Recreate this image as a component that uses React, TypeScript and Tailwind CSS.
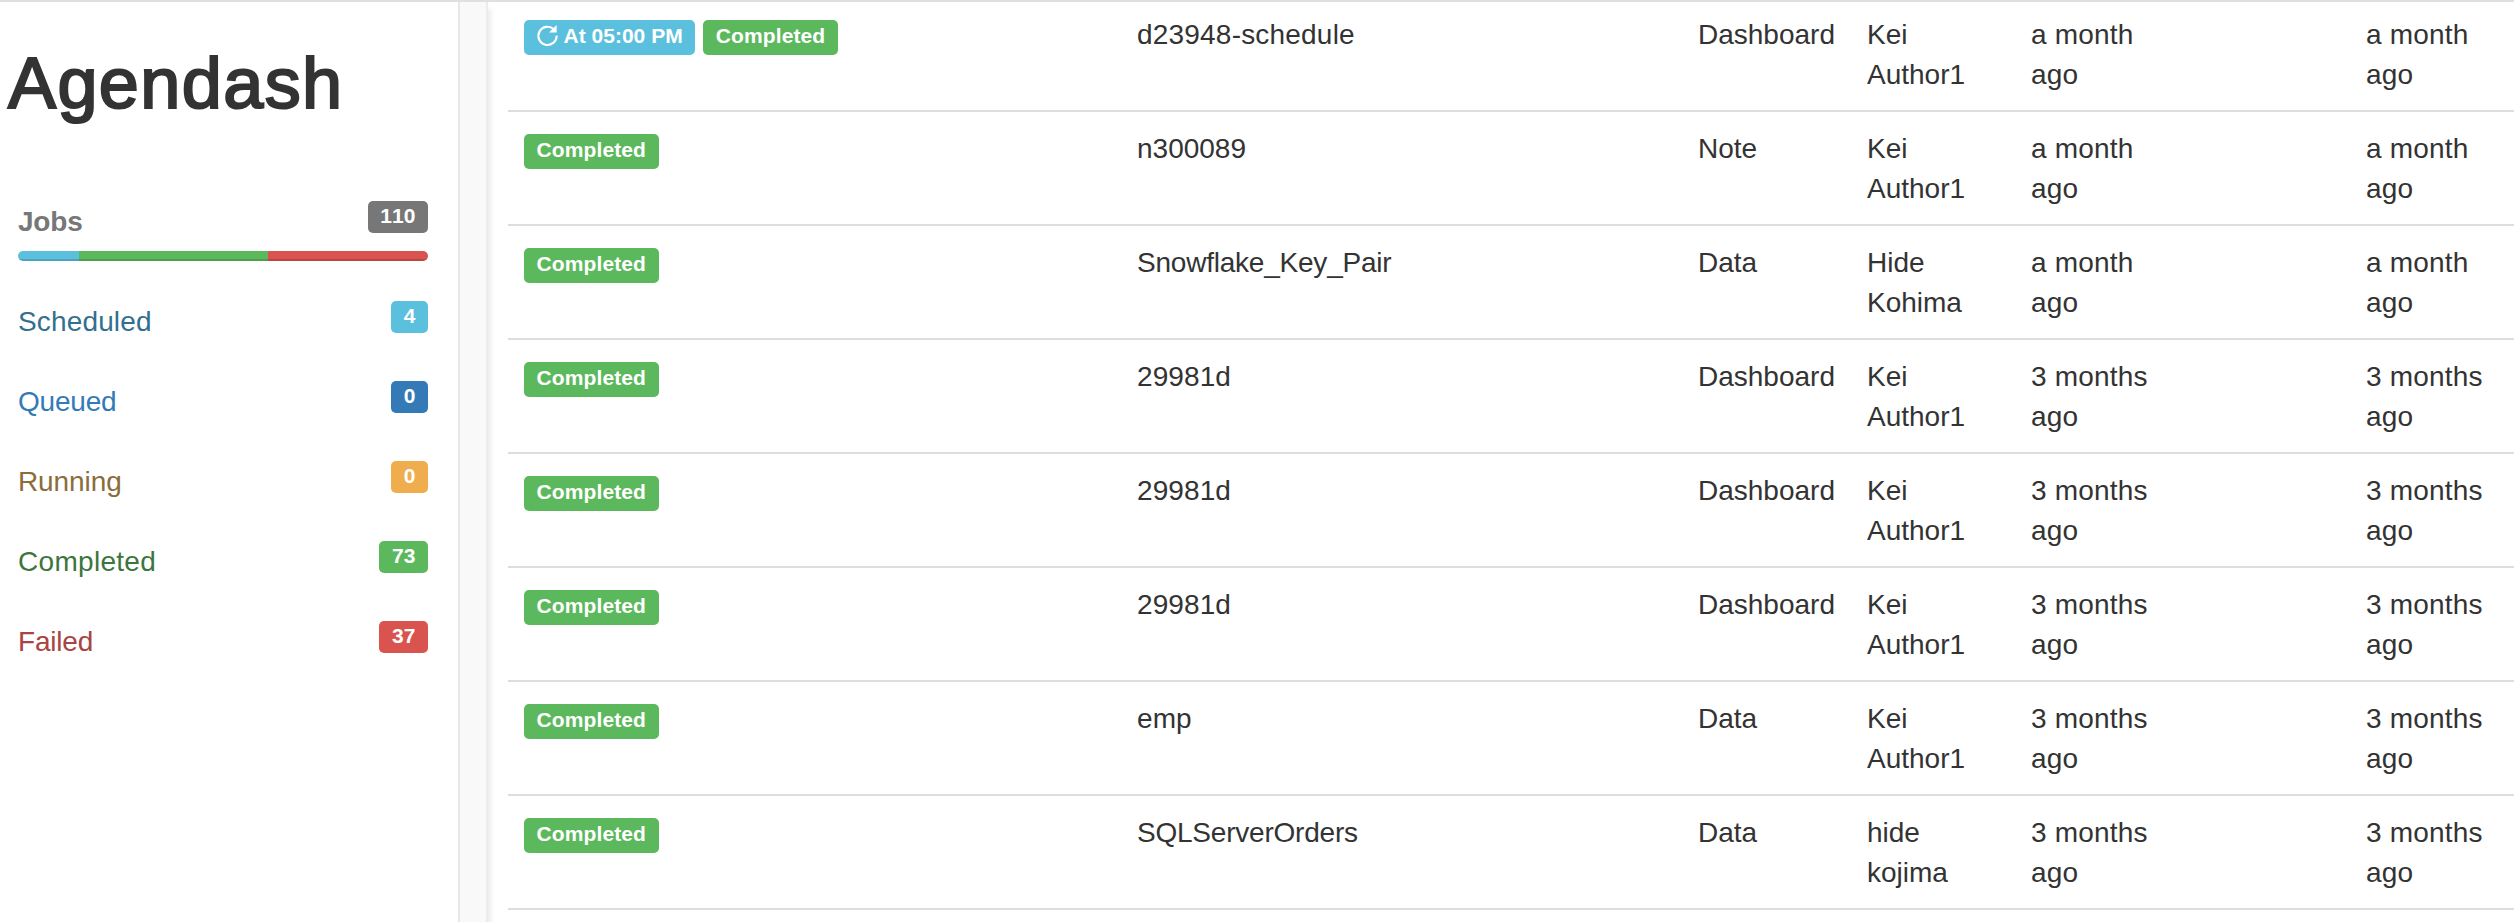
const rows = [
  { cron: 'At 05:00 PM', name: 'd23948-schedule', type: 'Dashboard', user: ['Kei', 'Author1'], when: ['a month', 'ago'], track: 'tracking-[0.2px]' },
  { name: 'n300089', type: 'Note', user: ['Kei', 'Author1'], when: ['a month', 'ago'], track: '' },
  { name: 'Snowflake_Key_Pair', type: 'Data', user: ['Hide', 'Kohima'], when: ['a month', 'ago'], track: 'tracking-[-0.22px]' },
  { name: '29981d', type: 'Dashboard', user: ['Kei', 'Author1'], when: ['3 months', 'ago'], track: 'tracking-[0.1px]' },
  { name: '29981d', type: 'Dashboard', user: ['Kei', 'Author1'], when: ['3 months', 'ago'], track: 'tracking-[0.1px]' },
  { name: '29981d', type: 'Dashboard', user: ['Kei', 'Author1'], when: ['3 months', 'ago'], track: 'tracking-[0.1px]' },
  { name: 'emp', type: 'Data', user: ['Kei', 'Author1'], when: ['3 months', 'ago'], track: 'tracking-[0.1px]' },
  { name: 'SQLServerOrders', type: 'Data', user: ['hide', 'kojima'], when: ['3 months', 'ago'], track: 'tracking-[-0.22px]' },
];

const states = [
  { label: 'Scheduled', count: 4, text: 'text-[#31708f] tracking-[0.15px]', bg: 'bg-[#5bc0de]' },
  { label: 'Queued', count: 0, text: 'text-[#337ab7] tracking-[-0.2px]', bg: 'bg-[#337ab7]' },
  { label: 'Running', count: 0, text: 'text-[#8a6d3b] tracking-[-0.1px]', bg: 'bg-[#f0ad4e]' },
  { label: 'Completed', count: 73, text: 'text-[#3c763d] tracking-[0.3px]', bg: 'bg-[#5cb85c]' },
  { label: 'Failed', count: 37, text: 'text-[#a94442] tracking-[-0.2px]', bg: 'bg-[#d9534f]' },
];

function Count({ value, bg }: { value: number; bg: string }) {
  return (
    <span
      className={`h-8 rounded-[5px] px-[12.6px] pt-1 text-[21px] leading-[21px] font-bold text-white [font-kerning:none] ${bg}`}
    >
      {value}
    </span>
  );
}

function RepeatIcon() {
  return (
    <svg className="mt-[5px] mr-[6px] h-[21px] w-[21px] overflow-visible" viewBox="0 0 21 21" fill="none">
      <path d="M16.8 4.3 A9.1 9.1 0 1 0 19.6 10.6" stroke="white" strokeWidth="2.2" />
      <path d="M19.6 0 V7.4 H12 Z" fill="white" />
    </svg>
  );
}

function Lines({ lines, className = '' }: { lines: string[]; className?: string }) {
  return (
    <div className={className}>
      {lines.map((line) => (
        <div key={line}>{line}</div>
      ))}
    </div>
  );
}

export default function App() {
  return (
    <div className="flex h-[922px] w-[2514px] flex-col overflow-hidden border-t-2 border-[#e0e0e0] bg-white font-['Liberation_Sans',Arial,sans-serif] text-[28px] leading-[40px] text-[#333]">
      <div className="flex min-h-0 flex-1">
        <aside className="w-[458px] shrink-0 pr-[30px]">
          <h1 className="pt-[42px] pl-[8px] text-[72px] leading-[79px] tracking-[1.4px] [-webkit-text-stroke:2.2px_#333]">
            Agendash
          </h1>
          <div className="mt-[78px] flex justify-between pl-[18px]">
            <span className="pt-[1px] font-bold tracking-[-0.2px] text-[#777]">Jobs</span>
            <Count value={110} bg="bg-[#777]" />
          </div>
          <div className="mt-[9px] ml-[18px] flex h-[10px] overflow-hidden rounded-[5px]">
            <div className="w-[61px] bg-[#5bc0de] shadow-[inset_0_-2px_0_rgba(0,0,0,0.15)]" />
            <div className="w-[189px] bg-[#5cb85c] shadow-[inset_0_-2px_0_rgba(0,0,0,0.15)]" />
            <div className="flex-1 bg-[#d9534f] shadow-[inset_0_-2px_0_rgba(0,0,0,0.15)]" />
          </div>
          <ul className="mt-10 ml-[18px]">
            {states.map((s) => (
              <li key={s.label} className="flex h-20 justify-between">
                <span className={`pt-[1px] ${s.text}`}>{s.label}</span>
                <Count value={s.count} bg={s.bg} />
              </li>
            ))}
          </ul>
        </aside>
        <div className="w-[30px] shrink-0 border-x-2 border-l-[#e7e7e7] border-r-[#ececec] bg-[#f9f9f9] shadow-[5px_5px_5px_-2px_rgba(0,0,0,0.08)]" />
        <main className="-mt-[6px] flex-1 pl-5">
          {rows.map((r, i) => (
            <div
              key={i}
              className="grid h-[114px] grid-cols-[613px_561px_169px_164px_335px_168px] border-t-2 border-[#ddd] pt-[17px] pl-4"
            >
              <div className="flex gap-2 pt-[5px] text-[21px] leading-[32px] font-bold text-white">
                {r.cron && (
                  <span className="flex h-[35px] rounded-[5px] bg-[#5bc0de] px-[12.6px]">
                    <RepeatIcon />
                    {r.cron}
                  </span>
                )}
                <span className="h-[35px] w-[135px] rounded-[5px] bg-[#5cb85c] px-[12.6px] tracking-[0.1px]">
                  Completed
                </span>
              </div>
              <div className={r.track}>{r.name}</div>
              <div>{r.type}</div>
              <Lines lines={r.user} />
              <Lines lines={r.when} className="tracking-[0.2px]" />
              <Lines lines={r.when} className="tracking-[0.2px]" />
            </div>
          ))}
          <div className="border-t-2 border-[#ddd]" />
        </main>
      </div>
    </div>
  );
}
